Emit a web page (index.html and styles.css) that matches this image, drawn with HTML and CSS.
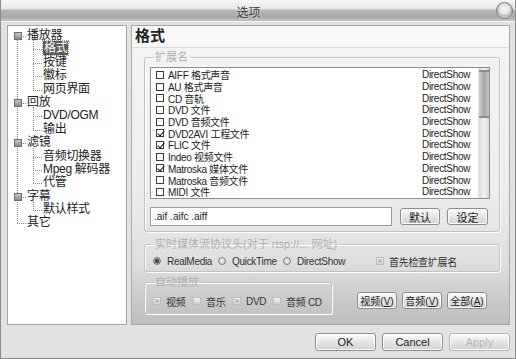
FILE: index.html
```html
<!DOCTYPE html>
<html lang="zh-CN">
<head>
    <meta charset="UTF-8">
    <title>选项</title>
    <link rel="stylesheet" href="styles.css">
</head>
<body>
    <div class="window">
        <div class="titlebar">
            <span class="title">选项</span>
            <span class="close"></span>
        </div><!-- titlebar -->

        <div class="main">
            <div class="tree">
                <ul class="roots">
                    <li class="root">
                        <div class="row"><span class="toggle"></span>播放器</div>
                        <ul class="kids">
                            <li class="row"><span class="sel">格式</span></li>
                            <li class="row">按键</li>
                            <li class="row">徽标</li>
                            <li class="row">网页界面</li>
                        </ul>
                    </li>
                    <li class="root">
                        <div class="row"><span class="toggle"></span>回放</div>
                        <ul class="kids">
                            <li class="row">DVD/OGM</li>
                            <li class="row">输出</li>
                        </ul>
                    </li>
                    <li class="root">
                        <div class="row"><span class="toggle"></span>滤镜</div>
                        <ul class="kids">
                            <li class="row">音频切换器</li>
                            <li class="row">Mpeg 解码器</li>
                            <li class="row">代管</li>
                        </ul>
                    </li>
                    <li class="root">
                        <div class="row"><span class="toggle"></span>字幕</div>
                        <ul class="kids">
                            <li class="row">默认样式</li>
                        </ul>
                    </li>
                    <li class="root">
                        <div class="row">其它</div>
                    </li>
                </ul>
            </div><!-- tree -->

            <div class="panel">
                <div class="panel-head">格式</div>

                <fieldset class="group ext">
                    <legend>扩展名</legend>
                    <div class="listbox">
                        <div class="items">
                            <div class="item"><span class="cb"></span><span class="name">AIFF 格式声音</span><span class="src">DirectShow</span></div>
                            <div class="item"><span class="cb"></span><span class="name">AU 格式声音</span><span class="src">DirectShow</span></div>
                            <div class="item"><span class="cb"></span><span class="name">CD 音轨</span><span class="src">DirectShow</span></div>
                            <div class="item"><span class="cb"></span><span class="name">DVD 文件</span><span class="src">DirectShow</span></div>
                            <div class="item"><span class="cb"></span><span class="name">DVD 音频文件</span><span class="src">DirectShow</span></div>
                            <div class="item"><span class="cb on"></span><span class="name">DVD2AVI 工程文件</span><span class="src">DirectShow</span></div>
                            <div class="item"><span class="cb on"></span><span class="name">FLIC 文件</span><span class="src">DirectShow</span></div>
                            <div class="item"><span class="cb"></span><span class="name">Indeo 视频文件</span><span class="src">DirectShow</span></div>
                            <div class="item"><span class="cb on"></span><span class="name">Matroska 媒体文件</span><span class="src">DirectShow</span></div>
                            <div class="item"><span class="cb"></span><span class="name">Matroska 音频文件</span><span class="src">DirectShow</span></div>
                            <div class="item"><span class="cb"></span><span class="name">MIDI 文件</span><span class="src">DirectShow</span></div>
                        </div>
                        <div class="scroll"><div class="thumb"></div></div>
                    </div><!-- listbox -->
                    <div class="ext-row">
                        <div class="textbox">.aif .aifc .aiff</div>
                        <button class="btn">默认</button>
                        <button class="btn">设定</button>
                    </div>
                </fieldset>

                <fieldset class="group rtsp">
                    <legend>实时媒体流协议头(对于 rtsp://... 网址)</legend>
                    <div class="opt-row">
                        <span class="opt w1"><span class="radio on"></span>RealMedia</span>
                        <span class="opt w2"><span class="radio"></span>QuickTime</span>
                        <span class="opt w3"><span class="radio"></span>DirectShow</span>
                        <span class="opt"><span class="xbox on"></span>首先检查扩展名</span>
                    </div>
                </fieldset>

                <div class="auto-row">
                    <fieldset class="group auto">
                        <legend>自动播放</legend>
                        <div class="opt-row">
                            <span class="opt w4"><span class="xbox on"></span>视频</span>
                            <span class="opt w4"><span class="xbox"></span>音乐</span>
                            <span class="opt w4"><span class="xbox on"></span>DVD</span>
                            <span class="opt"><span class="xbox"></span>音频 CD</span>
                        </div>
                    </fieldset>
                    <div class="auto-btns">
                        <button class="btn">视频(<u>V</u>)</button>
                        <button class="btn">音频(<u>V</u>)</button>
                        <button class="btn">全部(<u>A</u>)</button>
                    </div>
                </div>
            </div><!-- panel -->
        </div><!-- main -->

        <div class="footer">
            <button class="btn big">OK</button>
            <button class="btn big">Cancel</button>
            <button class="btn big off">Apply</button>
        </div>
    </div>
</body>
</html>
```

FILE: styles.css
```css
* {
    box-sizing: border-box;
}
body {
    margin: 0;
    font-family: "Liberation Sans", "Noto Sans CJK SC", sans-serif;
    color: #222;
}
.window {
    width: 516px;
    height: 359px;
    background: #e2e2e2;
    border: 1px solid #8c8c8c;
    border-top: none;
    display: flex;
    flex-direction: column;
}

/* title bar */
.titlebar {
    height: 22px;
    display: flex;
    align-items: center;
    padding-right: 2px;
    background: linear-gradient(#f7f7f7 0, #e8e8e8 40%, #b6b6b6 50%, #a9a9a9 80%, #c4c4c4 100%);
    border-bottom: 1px solid #f4f4f4;
}
.title {
    flex: 1;
    text-align: center;
    font-size: 12px;
    color: #3a3a3a;
    text-shadow: 0 0 3px #fff;
    padding-top: 2px;
}
.close {
    width: 17px;
    height: 17px;
    border-radius: 50%;
    border: 1px solid #7a7a7a;
    background: radial-gradient(circle at 50% 40%, #fafafa 0, #e2e2e2 45%, #b4b4b4 60%, #d8d8d8 75%, #a0a0a0 100%);
}

.main {
    height: 303px;
    display: flex;
    gap: 4px;
    padding: 3px 5px 0 6px;
}

/* tree */
.tree {
    width: 120px;
    background: #fff;
    border: 1px solid #a4a4a4;
    padding-top: 3px;
    font-size: 12px;
    letter-spacing: -0.3px;
}
.tree ul {
    list-style: none;
    margin: 0;
    padding: 0;
    position: relative;
}
.roots::before {
    content: "";
    position: absolute;
    left: 9px;
    top: 8px;
    bottom: 7px;
    border-left: 1px dotted #8a8a8a;
}
.kids::before {
    content: "";
    position: absolute;
    left: 25px;
    top: -2px;
    bottom: 7px;
    border-left: 1px dotted #8a8a8a;
}
.row {
    position: relative;
    height: 13.4px;
    line-height: 13.4px;
    padding-left: 19px;
    white-space: nowrap;
}
.row::before {
    content: "";
    position: absolute;
    left: 9px;
    width: 9px;
    top: 7px;
    border-top: 1px dotted #8a8a8a;
}
.kids .row {
    padding-left: 35px;
}
.kids .row::before {
    left: 25px;
    width: 9px;
}
.toggle {
    position: absolute;
    left: 6px;
    top: 3px;
    width: 8px;
    height: 8px;
    border: 1px solid #6c6c6c;
    background: linear-gradient(#c8c8c8, #8c8c8c);
    z-index: 1;
}
.sel {
    background: #5a5a5a;
    color: #fff;
    padding: 0 1px;
    outline: 1px dotted #999;
}

/* right panel */
.panel {
    flex: 1;
    border: 1px solid #a8a8a8;
    background: linear-gradient(#f4f4f4 0, #ededed 55%, #dedede 80%, #bdbdbd 100%);
}
.panel-head {
    height: 22px;
    line-height: 20px;
    padding-left: 3px;
    font-size: 15px;
    font-weight: 700;
    background: #f8f8f8;
    border-bottom: 1px solid #dadada;
}
.group {
    margin: 3px 9px 0 12px;
    padding: 0 9px 5px 5px;
    border: 1px solid #c2c2c2;
    border-radius: 3px;
    box-shadow: inset 1px 1px 0 #fff, 1px 1px 0 #fff;
}
.group legend {
    margin-left: 3px;
    padding: 0 2px;
    font-size: 11px;
    line-height: 12px;
    color: #b0b0b0;
}

.listbox {
    margin-top: 4px;
    height: 132px;
    display: flex;
    border: 1px solid #8e8e8e;
    background: #fff;
}
.items {
    flex: 1;
    padding-top: 1px;
}
.item {
    height: 11.7px;
    display: flex;
    align-items: center;
    font-size: 10px;
    letter-spacing: -0.3px;
    white-space: nowrap;
}
.cb {
    position: relative;
    width: 8px;
    height: 8px;
    margin: 0 4px 0 5px;
    border: 1px solid #3a3a3a;
    background: #fff;
}
.cb.on::after {
    content: "";
    position: absolute;
    left: 1.5px;
    top: -1px;
    width: 3px;
    height: 6px;
    border: solid #111;
    border-width: 0 1.5px 1.5px 0;
    transform: rotate(40deg);
}
.name {
    flex: 1;
}
.src {
    width: 56px;
}
.scroll {
    width: 11px;
    background: linear-gradient(90deg, #dcdcdc, #f0f0f0 50%, #d8d8d8);
    border-left: 1px solid #e6e6e6;
    padding-top: 2px;
}
.thumb {
    height: 48px;
    background: linear-gradient(90deg, #d0d0d0, #a4a4a4 50%, #c4c4c4);
    border-top: 2px solid #8a8a8a;
    border-bottom: 2px solid #8a8a8a;
}

.ext-row {
    margin-top: 8px;
    display: flex;
    align-items: center;
}
.textbox {
    width: 242px;
    height: 19px;
    line-height: 17px;
    padding-left: 3px;
    font-size: 10px;
    border: 1px solid #9c9c9c;
    background: #fff;
}
.ext-row .btn {
    width: 40px;
    margin-left: 8px;
}
.ext-row .btn + .btn {
    margin-left: 7px;
    width: 41px;
}

.btn {
    height: 17px;
    padding: 0;
    font-family: inherit;
    font-size: 11px;
    color: #222;
    border: 1px solid #8c8c8c;
    border-radius: 3px;
    background: linear-gradient(#fcfcfc, #e6e6e6 50%, #d2d2d2);
    box-shadow: inset 0 0 0 1px #fff;
}

.rtsp {
    margin-top: 6px;
    padding-bottom: 3px;
}
.opt-row {
    height: 14px;
    margin-top: 4px;
    display: flex;
    align-items: center;
    font-size: 10px;
    letter-spacing: -0.3px;
    color: #333;
    white-space: nowrap;
}
.opt {
    display: flex;
    align-items: center;
}
.rtsp .opt-row {
    padding-left: 3px;
}
.w1, .w2 {
    width: 65px;
}
.w3 {
    width: 93px;
}
.w4 {
    width: 40px;
}
.radio {
    width: 8px;
    height: 8px;
    margin-right: 6px;
    border-radius: 50%;
    border: 1px solid #7c7c7c;
    background: radial-gradient(#f4f4f4, #c4c4c4);
}
.radio.on {
    background: radial-gradient(#3c3c3c 0, #555 45%, #a8a8a8 60%, #c8c8c8);
}
.xbox {
    position: relative;
    width: 8px;
    height: 8px;
    margin-right: 5px;
    border: 1px solid #bcbcbc;
    background: linear-gradient(#f2f2f2, #cfcfcf);
    font-size: 8px;
    line-height: 6px;
    text-align: center;
    color: #888;
    letter-spacing: 0;
}
.xbox.on::after {
    content: "×";
}

.auto-row {
    display: flex;
    margin: 4px 9px 0 12px;
}
.auto {
    width: 188px;
    margin: 0;
    padding-bottom: 5px;
}
.auto .opt-row {
    margin-top: 6px;
    padding-left: 3px;
}
.auto-btns {
    margin-left: auto;
    margin-right: 13px;
    align-self: flex-end;
    padding-bottom: 5px;
    display: flex;
    gap: 5px;
}
.auto-btns .btn {
    width: 40px;
    font-size: 10px;
}

/* footer */
.footer {
    display: flex;
    justify-content: flex-end;
    gap: 6px;
    padding: 8px 5px 0 0;
}
.btn.big {
    width: 61px;
    height: 18px;
}
.btn.off {
    color: #b4b4b4;
    border-color: #b4b4b4;
}
```
